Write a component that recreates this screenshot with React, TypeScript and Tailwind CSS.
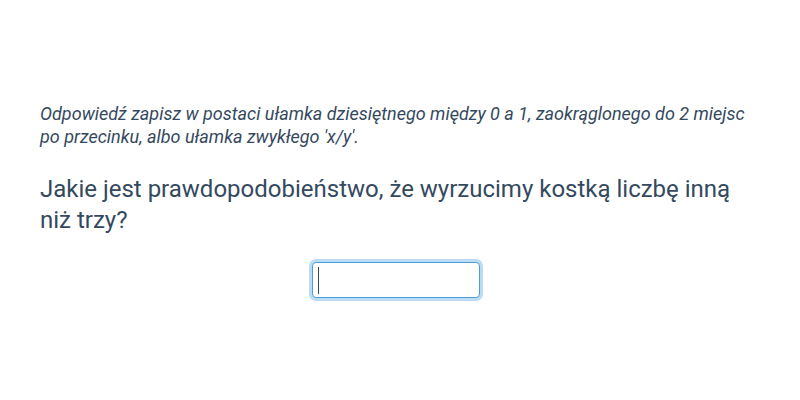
export default function App() {
  return (
    <div className="min-h-[400px] bg-white px-10 pt-[102px] text-[#34495e]" style={{ fontFamily: "Roboto, 'Noto Sans', sans-serif" }}>
      <p className="text-[18px] italic leading-[23px]">
        Odpowiedź zapisz w postaci ułamka dziesiętnego między 0 a 1, zaokrąglonego do 2 miejsc po przecinku, albo ułamka zwykłego 'x/y'.
      </p>
      <p className="mt-[26px] text-[24px] leading-[31px]">
        Jakie jest prawdopodobieństwo, że wyrzucimy kostką liczbę inną niż trzy?
      </p>
      <div className="mt-[26px] flex justify-center pr-2">
        <div className="relative">
          <input
            autoFocus
            type="text"
            className="h-9 w-[168px] rounded-[4px] border border-[#4a9ede] bg-white px-2 text-[17px] text-[#34495e] caret-transparent shadow-[0_0_0_3px_#bcdcf3] outline-none"
          />
          <span className="absolute left-[6px] top-[5px] h-[27px] w-px bg-[#34495e]" />
        </div>
      </div>
    </div>
  );
}
